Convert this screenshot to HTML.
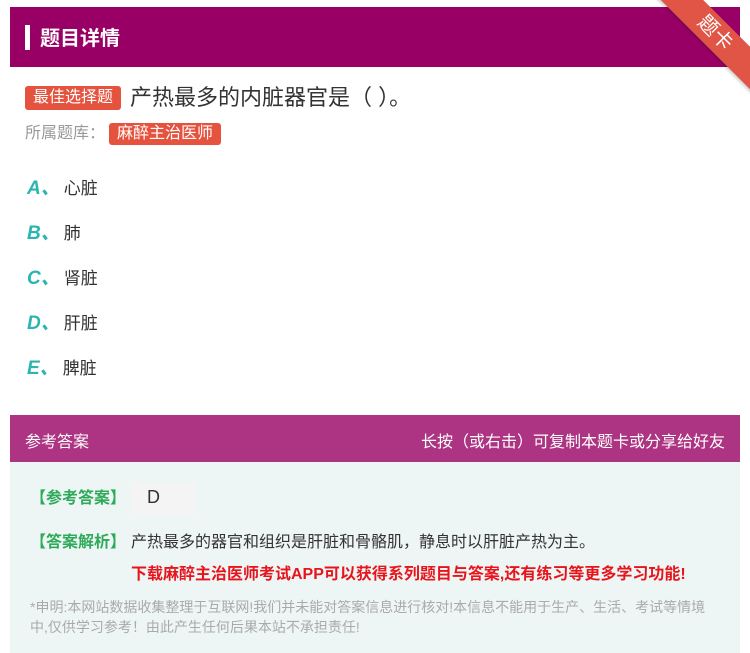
<!DOCTYPE html>
<html><head><meta charset="utf-8"><style>
body{margin:0;width:750px;height:653px;overflow:hidden;background:#fff;font-family:"Liberation Sans","Noto Sans CJK SC",sans-serif;position:relative}
.hd{position:absolute;left:10px;top:7px;width:730px;height:60px;background:#990066}
.hd .bar{position:absolute;left:15px;top:18px;width:5px;height:25px;background:#fff}
.hd .t{position:absolute;left:30px;top:15px;color:#fff;font-size:20px;font-weight:bold}
.rib{position:absolute;right:-40px;top:18px;width:150px;height:30px;background:#e05545;transform:rotate(45deg);color:#fff;text-align:center;font-size:20px;line-height:30px;box-shadow:0 2px 3px rgba(0,0,0,.2)}
.tag{display:inline-block;background:#e5533f;color:#fff;border-radius:3px;padding:0 8px;font-size:16px;line-height:24px}
.q{position:absolute;left:25px;top:80px;font-size:22px;color:#333}
.q .tag{vertical-align:3px;margin-right:9px}
.src{position:absolute;left:25px;top:119px;font-size:16px;color:#999}
.src .tag{font-size:16px;line-height:22px;margin-left:4px}
.opt{position:absolute;left:27px;font-size:17px;color:#333}
.opt b{color:#2bb5b0;font-style:italic;font-size:19px;margin-right:4px}
.ah{position:absolute;left:10px;top:415px;width:730px;height:47px;background:#ad3482;color:#fff;font-size:16px}
.ab{position:absolute;left:10px;top:462px;width:730px;height:191px;background:#eef6f5}
.g{color:#2eaa5a;font-weight:bold;font-size:16px}
</style></head><body>
<div class="hd"><div class="bar"></div><div class="t">题目详情</div></div>
<div class="rib">题卡</div>
<div class="q"><span class="tag">最佳选择题</span>产热最多的内脏器官是（ ）。</div>
<div class="src">所属题库：<span class="tag">麻醉主治医师</span></div>
<div class="opt" style="top:173px"><b>A、</b>心脏</div>
<div class="opt" style="top:218px"><b>B、</b>肺</div>
<div class="opt" style="top:263px"><b>C、</b>肾脏</div>
<div class="opt" style="top:308px"><b>D、</b>肝脏</div>
<div class="opt" style="top:353px"><b>E、</b>脾脏</div>
<div class="ah"><span style="position:absolute;left:15px;top:13px">参考答案</span><span style="position:absolute;right:15px;top:13px">长按（或右击）可复制本题卡或分享给好友</span></div>
<div class="ab">
<div style="position:absolute;left:20px;top:22px" class="g">【参考答案】</div>
<div style="position:absolute;left:121px;top:20px;width:64px;height:32px;background:#f4f4f4;color:#333;font-size:18px;padding-left:16px;box-sizing:border-box;line-height:30px">D</div>
<div style="position:absolute;left:20px;top:66px;font-size:16px;color:#333"><span class="g" style="margin-right:5px">【答案解析】</span>产热最多的器官和组织是肝脏和骨骼肌，静息时以肝脏产热为主。</div>
<div style="position:absolute;left:121px;top:98px;color:#e8141c;font-weight:bold;font-size:16px">下载麻醉主治医师考试APP可以获得系列题目与答案,还有练习等更多学习功能!</div>
<div style="position:absolute;left:20px;top:135px;width:690px;color:#aaa;font-size:14px;line-height:20px">*申明:本网站数据收集整理于互联网!我们并未能对答案信息进行核对!本信息不能用于生产、生活、考试等情境中,仅供学习参考！由此产生任何后果本站不承担责任!</div>
</div>
</body></html>
